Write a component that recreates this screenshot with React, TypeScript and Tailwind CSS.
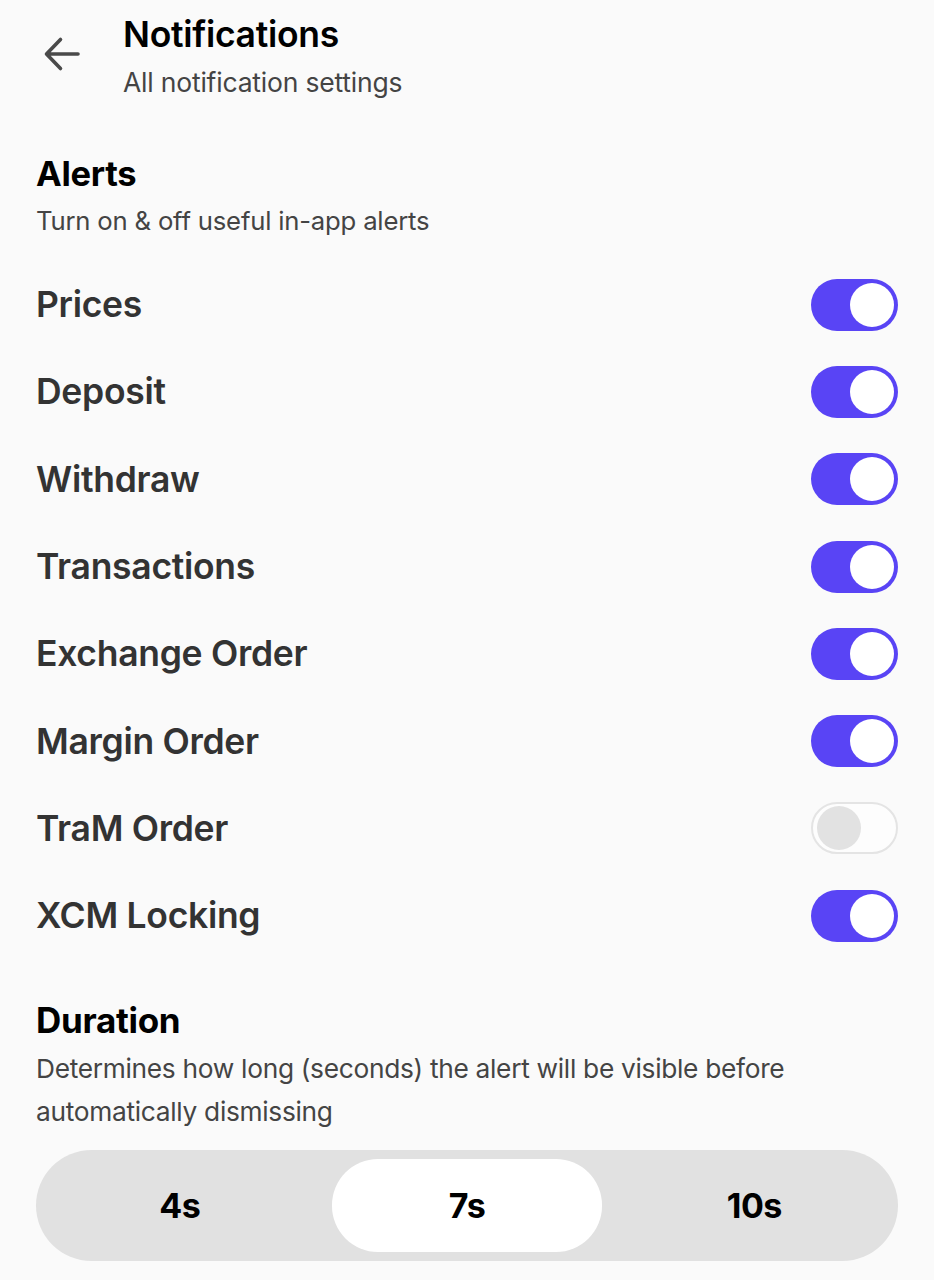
const ALERTS: { label: string; on: boolean }[] = [
  { label: "Prices", on: true },
  { label: "Deposit", on: true },
  { label: "Withdraw", on: true },
  { label: "Transactions", on: true },
  { label: "Exchange Order", on: true },
  { label: "Margin Order", on: true },
  { label: "TraM Order", on: false },
  { label: "XCM Locking", on: true },
];

const DURATIONS = ["4s", "7s", "10s"];

function Toggle({ on }: { on: boolean }) {
  if (on) {
    return (
      <div className="w-[87px] h-[52px] rounded-full bg-[#5944f5] flex items-center justify-end pr-[4px] shrink-0">
        <div className="size-[44px] rounded-full bg-white" />
      </div>
    );
  }
  return (
    <div className="w-[87px] h-[52px] rounded-full bg-[#fdfdfd] border-2 border-[#e4e4e4] flex items-center pl-[4px] shrink-0">
      <div className="size-[44px] rounded-full bg-[#e2e2e2]" />
    </div>
  );
}

export default function App() {
  return (
    <div
      className="min-h-[1280px] w-full bg-[#fafafa] px-[36px] text-[#111]"
      style={{ fontFamily: "Inter, 'Noto Sans', sans-serif" }}
    >
      {/* Header */}
      <div className="flex pt-[13px]">
        <div className="w-[87px] shrink-0">
          <svg width="40" height="40" viewBox="0 0 40 40" className="ml-[5px] mt-[21px]" fill="none">
            <path
              d="M37 20H6.5M19.5 5.5L5.5 20L19.5 34.5"
              stroke="#4a4a4a"
              strokeWidth="3.6"
              strokeLinecap="round"
              strokeLinejoin="round"
            />
          </svg>
        </div>
        <div>
          <h1 className="text-[35.5px] leading-[44px] font-semibold text-black tracking-[-0.3px]">Notifications</h1>
          <p className="mt-[5px] text-[26.5px] leading-[40px] text-[#444] tracking-[-0.2px]">All notification settings</p>
        </div>
      </div>

      {/* Alerts */}
      <h2 className="mt-[50px] text-[34.5px] leading-[44px] font-bold text-black tracking-[-0.3px]">Alerts</h2>
      <p className="mt-[7px] text-[25.7px] leading-[36px] text-[#444] tracking-[-0.2px]">Turn on &amp; off useful in-app alerts</p>

      <div className="mt-[22px] flex flex-col">
        {ALERTS.map((a) => (
          <div key={a.label} className="h-[87.3px] flex items-center justify-between">
            <span className="text-[35.5px] font-semibold text-[#333] tracking-[-0.3px]">{a.label}</span>
            <Toggle on={a.on} />
          </div>
        ))}
      </div>

      {/* Duration */}
      <h2 className="mt-[39px] text-[35px] leading-[44px] font-bold text-black tracking-[-0.3px]">Duration</h2>
      <p className="mt-[5px] text-[26.3px] leading-[43px] text-[#444] tracking-[-0.3px] pr-[60px]">
        Determines how long (seconds) the alert will be visible before automatically dismissing
      </p>

      <div className="mt-[17px] h-[111px] rounded-full bg-[#e1e1e1] grid grid-cols-3">
        {DURATIONS.map((d) => (
          <div key={d} className="p-[9px] flex">
            <div
              className={
                d === "7s"
                  ? "flex-1 rounded-[46px] bg-white flex items-center justify-center"
                  : "flex-1 flex items-center justify-center"
              }
            >
              <span className="text-[34px] font-bold text-black tracking-[-0.5px]">{d}</span>
            </div>
          </div>
        ))}
      </div>
    </div>
  );
}
